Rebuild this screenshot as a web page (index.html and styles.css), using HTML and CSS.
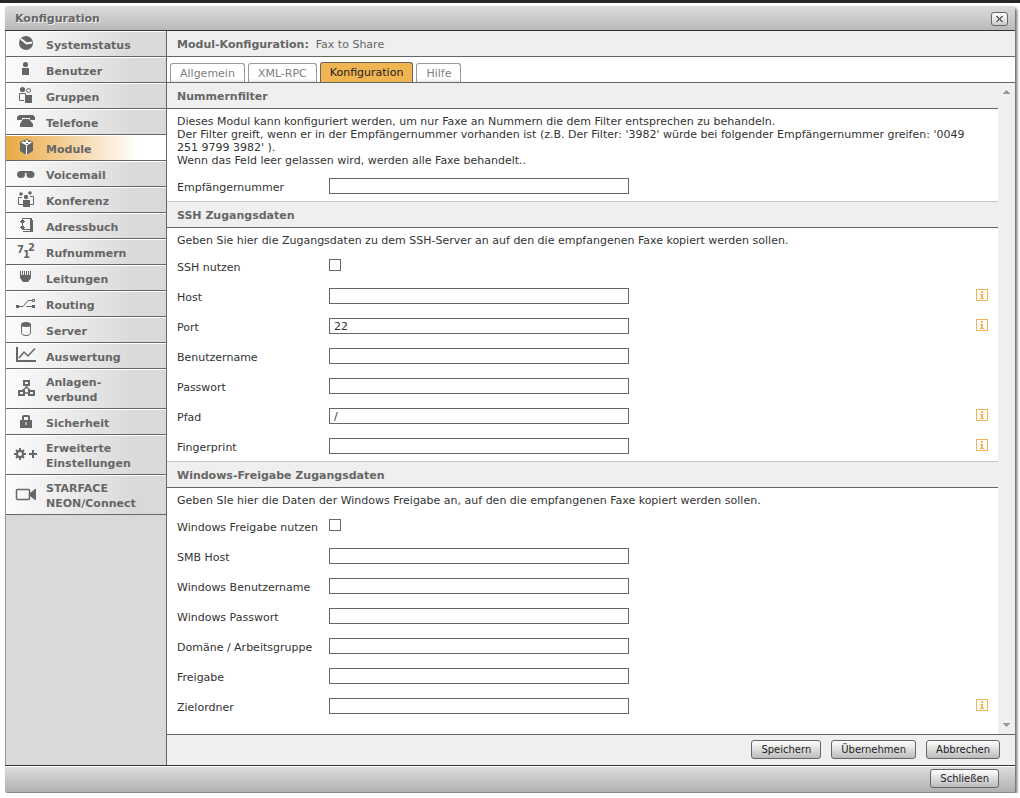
FILE: index.html
```
<!DOCTYPE html>
<html lang="de">
<head>
    <meta charset="UTF-8">
    <meta name="viewport" content="width=device-width, initial-scale=1.0">
    <title>Konfiguration</title>
    <link rel="stylesheet" href="styles.css">
</head>
<body>
    <div class="dialog">
        <div class="title-bar">
            <h1>Konfiguration</h1>
            <button type="button" class="close" aria-label="Schließen">
                <svg width="7" height="6" viewBox="0 0 7 6"><path d="M0 0h2v1h1v1h1V1h1V0h2v1H6v1H5v2h1v1h1v1H5V5H4V4H3v1H2v1H0V5h1V4h1V2H1V1H0z"/></svg>
            </button>
        </div>
        <div class="main">
            <nav class="sidebar">
                <a href="#"><svg class="icon" viewBox="0 0 24 19"><circle cx="12" cy="9" r="7"/><path class="cut" d="M7 5l5.500 4.500 5.500-1" stroke-width="2"/></svg><span>Systemstatus</span></a>
                <a href="#"><svg class="icon" viewBox="0 0 24 19"><circle cx="11.500" cy="4.500" r="2.600"/><path d="M8 8h7v7H8z"/></svg><span>Benutzer</span></a>
                <a href="#"><svg class="icon" viewBox="0 0 24 19"><circle cx="8.500" cy="3.500" r="2.600"/><circle class="line" cx="14.500" cy="4.500" r="2"/><path class="line" d="M10 14.500H5.500v-7h6V9"/><path d="M11 9h7v8h-7z"/></svg><span>Gruppen</span></a>
                <a href="#"><svg class="icon" viewBox="0 0 24 19"><path d="M3 5l2-2h14l2 2v3h-5V6H8v2H3z"/><path d="M9 7h6l4 5v3H6v-3z"/></svg><span>Telefone</span></a>
                <a href="#" class="active"><svg class="icon" viewBox="0 0 24 19"><path d="M12.500 1L19 4v9l-6.500 4L6 13V4z"/><path class="top" d="M12.500 2L18 4.500l-5.500 3L7 4.500z"/><path class="cut" d="M12.500 7v10"/><path d="M10 3h2v1h-2zM12 5h2v1h-2zM14 3h2v1h-2z"/></svg><span>Module</span></a>
                <a href="#"><svg class="icon" viewBox="0 0 24 19"><path d="M6 7h12v2H6z"/><ellipse cx="7" cy="10.500" rx="4" ry="3.500"/><ellipse cx="16.500" cy="10.500" rx="4" ry="3.500"/></svg><span>Voicemail</span></a>
                <a href="#"><svg class="icon" viewBox="0 0 24 19"><circle cx="7" cy="4" r="1.800"/><circle cx="16" cy="3" r="1.800"/><circle cx="12" cy="7" r="2.200"/><path class="line" d="M8 7.500H4.500v7H9M16 6.500h3.500v8H16"/><path d="M9 10h7v7H9z"/></svg><span>Konferenz</span></a>
                <a href="#"><svg class="icon" viewBox="0 0 24 19"><path class="line" d="M8.500 2.500h8v11h-8z"/><path d="M9 15h9V4h1v12H9zM16 2h2v13h-2zM6 5h5v1H6zM7 4h3v3H7zM6 11h5v1H6zM7 10h3v3H7z"/></svg><span>Adressbuch</span></a>
                <a href="#"><svg class="icon digits" viewBox="0 0 24 19"><text x="3" y="11">7</text><text x="9" y="16">1</text><text x="14" y="9">2</text></svg><span>Rufnummern</span></a>
                <a href="#"><svg class="icon" viewBox="0 0 24 19"><path d="M6 3h1v4h1V3h1v4h1V3h1v4h1V3h1v4h1V3h1v4h1V3h1v7l-3 4H9l-3-4z"/></svg><span>Leitungen</span></a>
                <a href="#"><svg class="icon" viewBox="0 0 24 19"><path d="M2 11h3v3H2zM18 11h3v3h-3z"/><path class="line" d="M5 12.500h4l5-6h4M18.500 5.500h2v2h-2zM12 12.500h6"/></svg><span>Routing</span></a>
                <a href="#"><svg class="icon" viewBox="0 0 24 19"><path class="line" d="M7.500 4.500v8q0 3 4.500 3t4.500-3v-8"/><path d="M7 5q0-3 5-3t5 3v1q-2 1-5 1T7 6z"/></svg><span>Server</span></a>
                <a href="#"><svg class="icon" viewBox="0 0 24 19"><path d="M2 1h2v13h18v2H2z"/><path class="line" d="M5 12l5-6 4 4 7-7.500" stroke-width="1.500"/></svg><span>Auswertung</span></a>
                <a href="#"><svg class="icon" viewBox="0 0 24 19"><path class="line" d="M10 2h5v4h-5zM5 12h5v4H5zM15 12h5v4h-5z" stroke-width="2"/><path class="line" d="M12.500 6v3M12.500 8L8 12M12.500 8l4.500 4M10 14h5" stroke-width="1.500"/></svg><span>Anlagen-<br>verbund</span></a>
                <a href="#"><svg class="icon" viewBox="0 0 24 19"><path class="line" d="M9 9V5q0-1 1-1h4q1 0 1 1v4" stroke-width="2"/><path d="M6 8h12v8H6z"/><path class="cut" d="M12 10v3"/></svg><span>Sicherheit</span></a>
                <a href="#"><svg class="icon" viewBox="0 0 24 19"><circle class="line" cx="6" cy="9" r="3" stroke-width="2"/><path class="line" d="M6 3v3M6 12v3M0 9h3M9 9h3M2 5l2 2M10 5L8 7M2 13l2-2M10 13l-2-2" stroke-width="2"/><path d="M15 8h3V5h2v3h3v2h-3v3h-2v-3h-3z"/></svg><span>Erweiterte<br>Einstellungen</span></a>
                <a href="#"><svg class="icon" viewBox="0 0 24 19"><rect class="line" x="2.500" y="4.500" width="13" height="10" rx="1" stroke-width="1.500"/><path d="M16 8l5-4h1v11h-1l-5-4z"/></svg><span>STARFACE<br>NEON/Connect</span></a>
            </nav>
            <div class="content">
                <div class="module-head"><h2>Modul-Konfiguration:</h2> <span>Fax to Share</span></div>
                <div class="tabs">
                    <button type="button">Allgemein</button>
                    <button type="button">XML-RPC</button>
                    <button type="button" class="active">Konfiguration</button>
                    <button type="button">Hilfe</button>
                </div>
                <div class="pane">
                    <form class="fields" id="moduleForm">
                        <h3>Nummernfilter</h3>
                        <div class="group">
                            <p>Dieses Modul kann konfiguriert werden, um nur Faxe an Nummern die dem Filter entsprechen zu behandeln.<br>
                            Der Filter greift, wenn er in der Empfängernummer vorhanden ist (z.B. Der Filter: '3982' würde bei folgender Empfängernummer greifen: '0049 251 9799 3982' ).<br>
                            Wenn das Feld leer gelassen wird, werden alle Faxe behandelt..</p>
                            <div class="row"><label for="number">Empfängernummer</label><input type="text" id="number"></div>
                        </div>

                        <h3>SSH Zugangsdaten</h3>
                        <div class="group">
                            <p>Geben Sie hier die Zugangsdaten zu dem SSH-Server an auf den die empfangenen Faxe kopiert werden sollen.</p>
                            <div class="row"><label for="useSsh">SSH nutzen</label><input type="checkbox" id="useSsh"></div>
                            <div class="row"><label for="host">Host</label><input type="text" id="host"><svg class="info" viewBox="0 0 12 12"><use href="#info"/></svg></div>
                            <div class="row"><label for="port">Port</label><input type="text" id="port" value="22"><svg class="info" viewBox="0 0 12 12"><use href="#info"/></svg></div>
                            <div class="row"><label for="user">Benutzername</label><input type="text" id="user"></div>
                            <div class="row"><label for="password">Passwort</label><input type="password" id="password"></div>
                            <div class="row"><label for="path">Pfad</label><input type="text" id="path" value="/"><svg class="info" viewBox="0 0 12 12"><use href="#info"/></svg></div>
                            <div class="row"><label for="fingerprint">Fingerprint</label><input type="text" id="fingerprint"><svg class="info" viewBox="0 0 12 12"><use href="#info"/></svg></div>
                        </div>

                        <h3>Windows-Freigabe Zugangsdaten</h3>
                        <div class="group">
                            <p>Geben SIe hier die Daten der Windows Freigabe an, auf den die empfangenen Faxe kopiert werden sollen.</p>
                            <div class="row"><label for="useShare">Windows Freigabe nutzen</label><input type="checkbox" id="useShare"></div>
                            <div class="row"><label for="smbHost">SMB Host</label><input type="text" id="smbHost"></div>
                            <div class="row"><label for="winUser">Windows Benutzername</label><input type="text" id="winUser"></div>
                            <div class="row"><label for="winPassword">Windows Passwort</label><input type="password" id="winPassword"></div>
                            <div class="row"><label for="domain">Domäne / Arbeitsgruppe</label><input type="text" id="domain"></div>
                            <div class="row"><label for="share">Freigabe</label><input type="text" id="share"></div>
                            <div class="row"><label for="folder">Zielordner</label><input type="text" id="folder"><svg class="info" viewBox="0 0 12 12"><use href="#info"/></svg></div>
                        </div>
                    </form>
                    <div class="scroll-track">
                        <svg width="7" height="4" viewBox="0 0 7 4"><path d="M3 0h1v1h1v1h1v1h1v1H0V3h1V2h1V1h1z"/></svg>
                        <svg width="7" height="4" viewBox="0 0 7 4"><path d="M0 0h7v1H6v1H5v1H4v1H3V3H2V2H1V1H0z"/></svg>
                    </div>
                </div>
                <div class="actions">
                    <button type="submit" form="moduleForm" class="btn">Speichern</button>
                    <button type="button" class="btn">Übernehmen</button>
                    <button type="button" class="btn">Abbrechen</button>
                </div>
            </div>
        </div>
        <div class="bottom-bar">
            <button type="button" class="btn">Schließen</button>
        </div>
    </div>
    <svg width="0" height="0" class="defs">
        <symbol id="info" viewBox="0 0 12 12">
            <path d="M0 0h12v12H0zM1 1v10h10V1z" fill-rule="evenodd"/>
            <path d="M5 2h2v2H5zM4 5h3v4h1v1H4V9h1V6H4z"/>
        </symbol>
    </svg>
</body>
</html>
```
FILE: styles.css
```
* { box-sizing: border-box; }
body {
    margin: 0;
    padding: 3px 5px 0;
    border-top: 3px solid #262626;
    background-color: #fff;
    color: #333;
    font-family: Verdana, "DejaVu Sans", sans-serif;
    font-size: 11px;
    line-height: 13px;
}
h1, h2, h3, p { margin: 0; font-size: 11px; }
h1, h2, h3 { color: #666; }
button, input { font-family: inherit; font-size: 11px; }
.defs { display: block; }

.dialog { border-radius: 3px; box-shadow: 2px 2px 3px rgba(0, 0, 0, 0.6); }
.title-bar {
    display: flex;
    align-items: center;
    justify-content: space-between;
    height: 25px;
    padding: 0 7px 0 10px;
    border-bottom: 1px solid #333;
    border-radius: 3px 3px 0 0;
    background: linear-gradient(#dcdcdc, #b9b9b9);
}
.title-bar h1 { text-shadow: 1px 1px 0 #eee; }
.close {
    display: flex;
    align-items: center;
    justify-content: center;
    width: 17px;
    height: 14px;
    padding: 0;
    margin-top: 2px;
    border: 1px solid #666;
    border-radius: 3px;
    background: linear-gradient(#fff, #ccc);
    fill: #666;
}
.main { display: flex; }

/* sidebar */
.sidebar {
    flex: none;
    width: 162px;
    border-left: 1px solid #999;
    border-right: 1px solid #666;
    background-color: #d9d9d9;
}
.sidebar a {
    display: flex;
    align-items: center;
    gap: 8px;
    min-height: 26px;
    padding: 3px 0 3px 8px;
    border-bottom: 1px solid #666;
    box-shadow: inset 1px 1px #fff;
    background: linear-gradient(to right, #fcfcfc, #d9d9d9 130px);
    color: #666;
    font-weight: bold;
    line-height: 15px;
    text-decoration: none;
}
.sidebar a.active { background: linear-gradient(to right, #e9a945, #fff 132px); box-shadow: inset 0 1px #fff; }
.sidebar span { padding-top: 3px; }
.icon { flex: none; width: 24px; height: 19px; fill: #666; }
.icon .line { fill: none; stroke: #666; }
.icon .cut { fill: none; stroke: #fff; }
.icon .top { fill: #fff; }
.digits { font-size: 10px; }

/* right side */
.content { flex: 1; min-width: 0; display: flex; flex-direction: column; }
.module-head {
    display: flex;
    align-items: center;
    gap: 7px;
    height: 26px;
    padding: 2px 0 0 10px;
    border-bottom: 1px solid #666;
    background-color: #efefef;
    color: #666;
}
.tabs {
    display: flex;
    align-items: flex-end;
    gap: 3px;
    height: 26px;
    padding-left: 3px;
    border-bottom: 1px solid #666;
    background-color: #fff;
}
.tabs button {
    height: 19px;
    padding: 0 9px;
    border: 1px solid #999;
    border-bottom: 0;
    border-radius: 3px 3px 0 0;
    background: linear-gradient(#fff 80%, #e8e8e8);
    color: #808080;
}
.tabs button.active { height: 20px; border-color: #666; background: #f0b450; color: #222; }

.pane { flex: 1; display: flex; }
.fields { flex: 1; padding-bottom: 13px; background-color: #fff; }
.fields h3 {
    height: 27px;
    padding: 7px 10px 5px;
    border-top: 1px solid #c4c4c4;
    border-bottom: 1px solid #666;
    background-color: #efefef;
}
.fields h3:first-child { height: 26px; border-top: 0; }
.group { padding: 6px 10px 0; }
.group p { margin-bottom: 4px; }
.row { display: flex; align-items: center; height: 30px; }
.row label { flex: none; width: 152px; padding-top: 2px; white-space: nowrap; }
.row input[type="text"],
.row input[type="password"] {
    width: 300px;
    height: 16px;
    padding: 0 4px;
    border: 1px solid #666;
    border-radius: 0;
    background-color: #fff;
    color: #333;
}
.row input[type="checkbox"] {
    appearance: none;
    width: 12px;
    height: 12px;
    margin: 0 0 2px;
    border: 1px solid #666;
    background-color: #fff;
}
.row input[type="checkbox"]:checked { background-color: #f0b450; }
.info { width: 12px; height: 12px; margin: 0 0 2px auto; fill: #f0b450; }
.scroll-track {
    flex: none;
    display: flex;
    flex-direction: column;
    align-items: center;
    justify-content: space-between;
    width: 17px;
    padding: 7px 0;
    background-color: #efefef;
    fill: #999;
}

/* buttons */
.actions {
    display: flex;
    align-items: center;
    justify-content: flex-end;
    gap: 10px;
    height: 31px;
    padding: 0 15px 2px 0;
    border-top: 1px solid #666;
    background-color: #efefef;
}
.bottom-bar {
    display: flex;
    align-items: center;
    justify-content: flex-end;
    height: 28px;
    padding: 0 16px 2px 0;
    border-top: 1px solid #333;
    border-bottom: 1px solid #888;
    border-radius: 0 0 3px 3px;
    box-shadow: inset 0 1px #fff;
    background: linear-gradient(#dedede, #b0b0b0);
}
.btn {
    height: 19px;
    padding: 0 9px;
    border: 1px solid #666;
    border-radius: 3px;
    background: linear-gradient(#fff, #bbb);
    color: #222;
    font-size: 10px;
}
```
